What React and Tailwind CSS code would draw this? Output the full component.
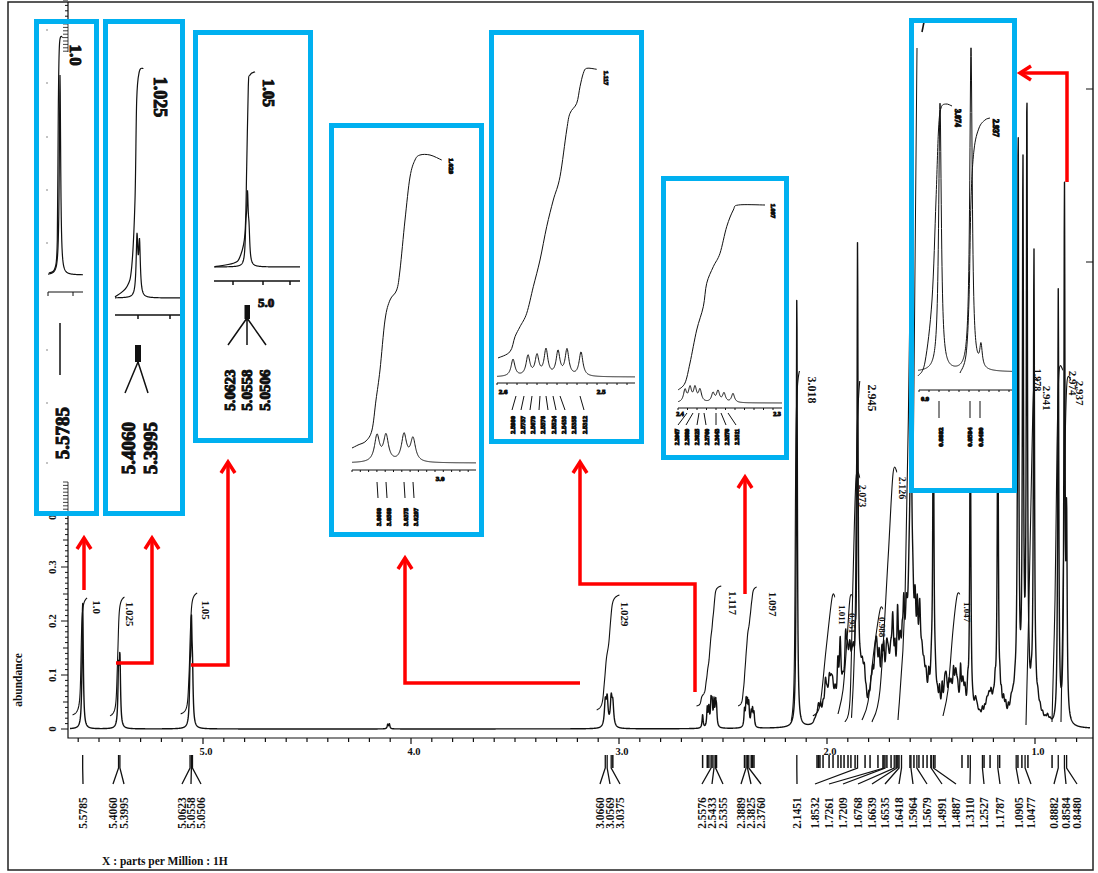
import React from "react";

const SERIF = "'Liberation Serif', 'Times New Roman', serif";
const RED = "#ff0000";
const INK = "#111";

// ppm -> page x, abundance -> page y
const xp = (ppm) => 203 + (5 - ppm) * 208;
const yp = (a) => 729 - a * 540;
const f = (n) => Math.round(n * 100) / 100;

const lor = (x, peaks) => {
  let s = 0;
  for (const [c, h, w] of peaks) {
    const d = (x - c) / w;
    s += h / (1 + d * d);
  }
  return s;
};

function specPath(x0, x1, base, peaks, step = 0.25) {
  const out = [];
  for (let x = x0; x <= x1; x += step) {
    out.push(`${out.length ? "L" : "M"}${f(x)},${f(base - lor(x, peaks))}`);
  }
  return out.join("");
}

function integPath(x0, x1, y0, y1, peaks, shift = -1.5, step = 0.25) {
  const pts = [];
  let acc = 0;
  for (let x = x0; x <= x1; x += step) {
    acc += lor(x, peaks) * step;
    pts.push([x, acc]);
  }
  return pts
    .map(([x, a], i) => `${i ? "L" : "M"}${f(x + shift)},${f(y0 - (a / acc) * (y0 - y1))}`)
    .join("");
}

// catmull-rom through measured points
function smooth(pts) {
  let d = `M${pts[0][0]},${pts[0][1]}`;
  for (let i = 0; i < pts.length - 1; i++) {
    const p0 = pts[i - 1] || pts[i];
    const p1 = pts[i];
    const p2 = pts[i + 1];
    const p3 = pts[i + 2] || p2;
    const c1 = [p1[0] + (p2[0] - p0[0]) / 6, p1[1] + (p2[1] - p0[1]) / 6];
    const c2 = [p2[0] - (p3[0] - p1[0]) / 6, p2[1] - (p3[1] - p1[1]) / 6];
    d += `C${f(c1[0])},${f(c1[1])} ${f(c2[0])},${f(c2[1])} ${f(p2[0])},${f(p2[1])}`;
  }
  return d;
}

// ---------- main spectrum data (ppm, abundance, width ppm) ----------
const PEAKS = [
  [5.5785, 0.235, 0.0035],
  [5.406, 0.1, 0.0035],
  [5.3995, 0.12, 0.0035],
  [5.0623, 0.08, 0.0035],
  [5.0558, 0.17, 0.0035],
  [5.0506, 0.08, 0.0035],
  [4.112, 0.008, 0.003],
  [4.104, 0.009, 0.003],
  [3.066, 0.045, 0.005],
  [3.0569, 0.05, 0.005],
  [3.0375, 0.05, 0.005],
  [3.0297, 0.04, 0.005],
  [2.598, 0.025, 0.003],
  [2.5757, 0.035, 0.003],
  [2.5679, 0.035, 0.003],
  [2.5576, 0.045, 0.003],
  [2.5524, 0.04, 0.003],
  [2.5433, 0.045, 0.003],
  [2.5355, 0.04, 0.003],
  [2.5312, 0.03, 0.003],
  [2.3967, 0.03, 0.003],
  [2.3889, 0.046, 0.003],
  [2.3825, 0.04, 0.003],
  [2.376, 0.04, 0.003],
  [2.3643, 0.025, 0.003],
  [2.3578, 0.03, 0.003],
  [2.3511, 0.025, 0.003],
  [2.1451, 0.8, 0.003],
  [1.8532, 0.78, 0.0028],
  [1.5964, 0.45, 0.003],
  [1.4887, 0.58, 0.003],
  [1.311, 0.58, 0.003],
  [1.1787, 0.6, 0.003],
  [1.081, 1.03, 0.003],
  [1.058, 0.99, 0.003],
  [1.039, 1.1, 0.003],
  [1.005, 0.83, 0.003],
  [0.8882, 0.8, 0.003],
  [0.8584, 0.98, 0.003],
  [0.848, 0.35, 0.003],
  [1.6, 0.09, 0.035],
  [1.93, 0.025, 0.05],
];

const ENV = [
  [2.07, 0], [2.04, 0.03], [1.99, 0.05], [1.94, 0.08], [1.9, 0.06], [1.86, 0.05],
  [1.8, 0.045], [1.76, 0.07], [1.71, 0.09], [1.66, 0.11], [1.62, 0.13], [1.59, 0.14],
  [1.55, 0.11], [1.51, 0.06], [1.47, 0.03], [1.43, 0.045], [1.38, 0.07], [1.34, 0.05],
  [1.29, 0.025], [1.22, 0.025], [1.14, 0.035], [1.0, 0.025], [0.95, 0.015], [0.9, 0],
];
const env = (p) => {
  for (let i = 0; i < ENV.length - 1; i++) {
    const [p0, v0] = ENV[i];
    const [p1, v1] = ENV[i + 1];
    if (p <= p0 && p >= p1) return v0 + ((v1 - v0) * (p0 - p)) / (p0 - p1);
  }
  return 0;
};
let seed = 11;
const rnd = () => (seed = (seed * 16807) % 2147483647) / 2147483647;
for (let p = 2.06; p > 0.92; p -= 0.007 + rnd() * 0.007) {
  const e = env(p) * 1.5;
  if (e > 0.004) PEAKS.push([p, e * (0.3 + 0.7 * rnd()), 0.0035 + rnd() * 0.004]);
}

const toPx = (list) => list.map(([p, a, w]) => [xp(p), a * 540, w * 208]);
const PX = toPx(PEAKS);
const SPECTRUM = specPath(70, 1090, 729, PX);

const INTEGRALS = [
  [5.62, 5.55, 715, 598, "1.0", 97, 607],
  [5.44, 5.37, 716, 597, "1.025", 130, 614],
  [5.1, 5.02, 714, 593, "1.05", 206, 610],
  [3.1, 2.99, 710, 595, "1.029", 625, 614],
  [2.62, 2.5, 706, 586, "1.117", 733, 603],
  [2.42, 2.33, 706, 587, "1.097", 773, 604],
  [2.165, 2.125, 722, 371, "3.018", 812, 390],
  [1.875, 1.835, 722, 381, "2.945", 872, 398],
].map(([hi, lo, y0, y1, label, lx, ly]) => {
  const pk = toPx(PEAKS.filter(([p, , w]) => p <= hi && p >= lo && w < 0.01));
  return { d: integPath(xp(hi), xp(lo), y0, y1, pk), label, lx, ly };
});

const DENSE_INTEGRALS = [
  [[813, 716], [820, 705], [826, 650], [832, 598], [835, 597]],
  [[838, 714], [843, 690], [847, 640], [850, 598], [853, 597]],
  [[845, 722], [850, 700], [853, 580], [856, 479], [860, 478]],
  [[862, 720], [868, 702], [874, 650], [880, 610], [883, 609]],
  [[872, 722], [880, 690], [888, 560], [893, 474], [897, 472]],
  [[898, 720], [905, 600], [910, 300], [913, 20]],
  [[943, 716], [948, 690], [953, 630], [957, 596], [960, 594]],
  [[1026, 725], [1029, 600], [1032, 450], [1034, 383], [1038, 381]],
  [[1052, 722], [1055, 600], [1057, 450], [1059, 372], [1063, 370]],
  [[1061, 722], [1063, 600], [1065, 450], [1067, 382], [1071, 380]],
];
const DENSE_LABELS = [
  ["1.011", 842, 615, 9],
  ["0.951", 852, 623, 9],
  ["2.073", 862, 496, 10],
  ["0.988", 882, 627, 9],
  ["2.126", 902, 488, 10],
  ["1.047", 967, 612, 9],
  ["1.978", 1037, 380, 10],
  ["2.941", 1047, 398, 11],
  ["2.974", 1073, 383, 11],
  ["2.937", 1080, 393, 11],
];

const PPM_LABELS = [
  [5.5785, 83], [5.406, 113], [5.3995, 124],
  [5.0623, 182], [5.0558, 191], [5.0506, 201],
  [3.066, 600], [3.0569, 610], [3.0375, 620],
  [2.5576, 702], [2.5433, 712], [2.5355, 723],
  [2.3889, 741], [2.3825, 751], [2.376, 761],
  [2.1451, 797],
  [1.8532, 815], [1.7261, 829], [1.7209, 843], [1.6768, 858], [1.6639, 872],
  [1.6535, 885], [1.6418, 899], [1.5964, 913], [1.5679, 927], [1.4991, 942],
  [1.4887, 956], [1.311, 970], [1.2527, 984], [1.1787, 1000], [1.0905, 1019],
  [1.0477, 1031], [0.8882, 1054], [0.8584, 1066], [0.848, 1077],
];
const EXTRA_TICKS = [
  3.0297, 2.598, 2.5757, 2.5679, 2.5524, 2.5312, 2.3967, 2.3643, 2.3578, 2.3511,
  2.048, 2.041, 2.034, 2.019, 1.99, 1.971, 1.947, 1.933, 1.918, 1.899, 1.885, 1.865,
  1.817, 1.793, 1.755, 1.731, 1.712, 1.692, 1.668, 1.659, 1.601, 1.582, 1.558, 1.538,
  1.519, 1.5, 1.481, 1.351, 1.322, 1.245, 1.216, 1.17, 1.082, 1.063, 1.034, 0.918,
];

const T = ({ x, y, r = 0, s = 11, anchor = "middle", children }) => (
  <text
    x={x}
    y={y}
    fontSize={s}
    fontWeight="bold"
    fontFamily={SERIF}
    fill={INK}
    textAnchor={anchor}
    dominantBaseline="central"
    transform={r ? `rotate(${r} ${x} ${y})` : undefined}
  >
    {children}
  </text>
);

const Arrow = ({ d, head }) => (
  <g stroke={RED} strokeWidth="3.5" fill="none" strokeLinecap="butt" strokeLinejoin="miter">
    <path d={d} />
    <path d={head} />
  </g>
);

function Inset({ className, vb, children }) {
  return (
    <div className={`absolute border-[5px] border-[#00b0f0] bg-white ${className}`}>
      <svg className="block h-full w-full" viewBox={vb} preserveAspectRatio="none">
        <g stroke={INK} fill="none" strokeWidth="1">
          {children}
        </g>
      </svg>
    </div>
  );
}

const Ticks = ({ x0, x1, y, step, len = 2 }) => {
  const out = [];
  for (let x = x0; x <= x1; x += step) out.push(`M${f(x)},${y}L${f(x)},${y + len}`);
  return <path d={`M${x0},${y}L${x1},${y}` + out.join("")} />;
};

function MainChart() {
  const yTicks = [];
  for (let i = 0; i <= 135; i++) {
    const y = yp(i / 100);
    const len = i % 10 === 0 ? 7 : i % 5 === 0 ? 5 : 3;
    yTicks.push(`M${68 - len},${f(y)}L68,${f(y)}`);
  }
  const xTicks = [];
  for (let p = 56; p >= 7; p--) {
    const x = xp(p / 10);
    if (x > 70 && x < 1092) xTicks.push(`M${f(x)},738L${f(x)},${p % 10 === 0 ? 744 : 742}`);
  }

  return (
    <svg className="block" width="1098" height="873" viewBox="0 0 1098 873">
      <rect x="8" y="2" width="1085" height="868" fill="none" stroke="#222" strokeWidth="1.5" />

      {/* axes */}
      <g stroke={INK} strokeWidth="1.2" fill="none">
        <path d="M68,2L68,738L1093,738" />
        <path d={yTicks.join("")} strokeWidth="1" />
        <path d={xTicks.join("")} />
        <path d="M1086,89L1093,89M1086,262L1093,262" />
      </g>
      {["0", "0.1", "0.2", "0.3", "0.4"].map((t, i) => (
        <T key={t} x={52} y={yp(i / 10)} r={-90} s={11}>
          {t}
        </T>
      ))}
      {[5, 4, 3, 2, 1].map((v) => (
        <T key={v} x={xp(v) + 3} y={751} s={10.5}>
          {v}.0
        </T>
      ))}
      <T x={18} y={680} r={-90} s={11.5}>
        abundance
      </T>
      <T x={102} y={861} s={11.5} anchor="start">
        X : parts per Million : 1H
      </T>

      {/* spectrum */}
      <path d={SPECTRUM} stroke={INK} strokeWidth="1.4" fill="none" strokeLinejoin="round" />

      {/* integrals */}
      <g stroke={INK} strokeWidth="1.1" fill="none">
        {INTEGRALS.map((g) => (
          <path key={g.label} d={g.d} />
        ))}
        {DENSE_INTEGRALS.map((pts, i) => (
          <path key={i} d={smooth(pts)} />
        ))}
      </g>
      {INTEGRALS.map((g) => (
        <T key={g.label} x={g.lx} y={g.ly} r={90} s={g.label.startsWith("3") || g.label.startsWith("2") ? 12 : 11}>
          {g.label}
        </T>
      ))}
      {DENSE_LABELS.map(([t, x, y, s]) => (
        <T key={t} x={x} y={y} r={90} s={s}>
          {t}
        </T>
      ))}

      {/* peak picking */}
      <g stroke={INK} strokeWidth="1.5" fill="none">
        {EXTRA_TICKS.map((p) => (
          <path key={p} d={`M${f(xp(p))},755L${f(xp(p))},768`} />
        ))}
        {PPM_LABELS.map(([p, lx]) => (
          <path key={p} d={`M${f(xp(p))},755L${f(xp(p))},768L${lx},784`} strokeWidth="1.3" />
        ))}
      </g>
      {PPM_LABELS.map(([p, lx]) => (
        <T key={p} x={lx} y={813} r={-90} s={11.5}>
          {p.toFixed(4)}
        </T>
      ))}

      {/* red pointers */}
      <Arrow d="M84,590L84,539" head="M77,549L84,538L91,549" />
      <Arrow d="M116,663L152,663L152,539" head="M145,549L152,538L159,549" />
      <Arrow d="M191,665L228,665L228,463" head="M221,473L228,462L235,473" />
      <Arrow d="M580,683L405,683L405,559" head="M398,569L405,558L412,569" />
      <Arrow d="M695,692L695,584L580,584L580,463" head="M573,473L580,462L587,473" />
      <Arrow d="M745,594L745,478" head="M738,488L745,477L752,488" />
      <Arrow d="M1067,182L1067,73L1021,73" head="M1031,66L1020,73L1031,80" />
    </svg>
  );
}

export default function App() {
  const axisTop = [];
  for (let y = 24; y <= 52; y += 3.4) axisTop.push(`M63,${f(y)}L68,${f(y)}`);
  for (let y = 482; y <= 511; y += 3.4) axisTop.push(`M63,${f(y)}L68,${f(y)}`);

  return (
    <div className="relative h-[873px] w-[1098px] overflow-hidden bg-white">
      <MainChart />

      {/* 5.5785 */}
      <Inset className="left-[34px] top-[19px] h-[497px] w-[65px]" vb="39 24 55 487">
        <path d={"M68,24L68,52M68,482L68,511" + axisTop.join("")} strokeWidth="0.8" />
        <path d="M47,29v2M47,82v2M47,136v2M47,189v2M47,242v2M47,349v2M47,402v2M47,462v2" stroke="#888" />
        <path d={specPath(48, 83, 275, [[60, 200, 0.8]])} strokeWidth="1.2" />
        <path d={smooth([[49, 273], [55, 268], [57.3, 240], [58.3, 110], [59.5, 44], [62.7, 37]])} strokeWidth="1.2" />
        <Ticks x0={48} x1={83} y={292} step={25} len={4} />
        <path d="M60,323L60,375" strokeWidth="1.5" />
        <T x={75} y={55} r={90} s={17}>
          1.0
        </T>
        <T x={62} y={433} r={-90} s={19}>
          5.5785
        </T>
      </Inset>

      {/* 5.4060 / 5.3995 */}
      <Inset className="left-[103px] top-[19px] h-[497px] w-[82px]" vb="108 24 72 487">
        <path d={specPath(115, 183, 298, [[137, 58, 1], [139.5, 52, 1]])} strokeWidth="1.2" />
        <path d={smooth([[115, 297], [126.7, 287], [131.7, 267], [135, 200], [136.7, 100], [139.3, 71.7], [143.3, 68.3]])} strokeWidth="1.2" />
        <path d="M115,315L183,315M138,315L138,319M170,315L170,319" strokeWidth="1.5" />
        <rect x="135" y="345" width="6" height="17" fill={INK} stroke="none" />
        <path d="M138,362L125,393M138,362L148,393" strokeWidth="1.5" />
        <T x={160} y={97} r={90} s={18}>
          1.025
        </T>
        <T x={128} y={448} r={-90} s={19}>
          5.4060
        </T>
        <T x={150} y={448} r={-90} s={19}>
          5.3995
        </T>
      </Inset>

      {/* 5.06 triplet */}
      <Inset className="left-[193px] top-[30px] h-[413px] w-[120px]" vb="198 35 110 403">
        <path d={specPath(214, 300, 267, [[246, 30, 0.9], [247.5, 62, 0.9], [249, 26, 0.9]])} strokeWidth="1.2" />
        <path d={smooth([[215, 266.7], [233.3, 263.3], [240, 256.7], [245, 233.3], [246.7, 166.7], [248.3, 86.7], [250, 75], [255, 71.7]])} strokeWidth="1.2" />
        <path d="M214,281L300,281M233,281L233,285M263,281L263,285M290,281L290,285" strokeWidth="1.5" />
        <T x={266} y={302} s={13}>
          5.0
        </T>
        <rect x="244.5" y="305" width="5.5" height="14" fill={INK} stroke="none" />
        <path d="M247,318L228,345M247,318L247,345M247,318L266,345" strokeWidth="1.5" />
        <T x={268} y={93} r={90} s={16}>
          1.05
        </T>
        {[["5.0623", 230], ["5.0558", 247], ["5.0506", 265]].map(([t, x]) => (
          <T key={t} x={x} y={390} r={-90} s={15}>
            {t}
          </T>
        ))}
      </Inset>

      {/* 3.05 */}
      <Inset className="left-[329px] top-[123px] h-[414px] w-[155px]" vb="334 128 145 404">
        <path d={specPath(352, 476, 463, [[377, 26, 3], [386, 26, 3], [404, 27, 3], [413, 23, 3]])} />
        <path d={smooth([[352, 448], [358, 445], [366, 441], [372, 430], [376, 400], [380, 370], [385, 320], [390, 300], [396.7, 290], [400, 270], [405, 220], [410, 177], [415, 160], [420, 155], [430, 155], [441.7, 160]])} />
        <Ticks x0={352} x1={476} y={470} step={8.3} len={2} />
        <T x={440} y={479} s={7}>
          3.0
        </T>
        <path d="M377,482L378,498M386,482L387,498M404,482L405,498M413,482L414,498" />
        <T x={451} y={166} r={90} s={7}>
          1.029
        </T>
        {[["3.0660", 378], ["3.0569", 388], ["3.0375", 405], ["3.0297", 415]].map(([t, x]) => (
          <T key={t} x={x} y={517} r={-90} s={6.5}>
            {t}
          </T>
        ))}
      </Inset>

      {/* 2.55 */}
      <Inset className="left-[489px] top-[30px] h-[414px] w-[155px]" vb="494 35 145 404">
        <path d={specPath(497, 635, 377, [[513, 17, 2.3], [528, 20, 2.3], [537, 20, 2.3], [546, 26, 2.3], [558, 24, 2.3], [567, 26, 2.3], [581, 24, 2.3]])} />
        <path d={smooth([[498, 358], [510, 351.7], [515, 336.7], [520, 326.7], [526.7, 313.3], [533.3, 286.7], [540, 260], [546.7, 226.7], [553.3, 200], [560, 176.7], [566.7, 130], [570, 113.3], [576.7, 103.3], [580, 86.7], [583.3, 73.3], [586.7, 68.3], [596.7, 69.3]])} />
        <Ticks x0={497} x1={635} y={383} step={10} len={2} />
        <T x={503} y={392} s={7}>
          2.6
        </T>
        <T x={601} y={392} s={7}>
          2.5
        </T>
        <path d="M516,396L512,410M524,396L521,410M532,396L530,410M540,396L539,410M546,396L548,410M553,396L556,410M560,396L565,410M580,396L584,410" />
        <T x={606} y={78} r={90} s={6.5}>
          1.117
        </T>
        {["2.5980", "2.5757", "2.5679", "2.5576", "2.5524", "2.5433", "2.5355", "2.5312"].map((t, i) => (
          <T key={t} x={512 + i * 10.3} y={425} r={-90} s={6.5}>
            {t}
          </T>
        ))}
      </Inset>

      {/* 2.38 */}
      <Inset className="left-[661px] top-[176px] h-[284px] w-[128px]" vb="666 181 118 274">
        <path d={specPath(678, 782, 403, [[685, 12, 1.8], [690, 14, 1.8], [695, 14, 1.8], [700, 12, 1.8], [713, 9, 1.8], [718, 11, 1.8], [724, 9, 1.8], [733, 9, 1.8]])} />
        <path d={smooth([[678, 390], [685, 383], [690, 363], [696.7, 330], [703.3, 306.7], [706.7, 283.3], [713.3, 266.7], [720, 253.3], [726.7, 226.7], [733.3, 210], [738.3, 205], [765, 205]])} />
        <Ticks x0={678} x1={782} y={408} step={9.5} len={2} />
        <T x={680} y={414} s={6}>
          2.4
        </T>
        <T x={777} y={414} s={6}>
          2.3
        </T>
        <path d="M687,413L678,425M693,413L686,425M699,413L697,425M704,413L706,425M716,413L716,425M721,413L726,425M728,413L736,425" />
        <T x={773} y={211} r={90} s={6.5}>
          1.097
        </T>
        {["2.3967", "2.3889", "2.3825", "2.3760", "2.3643", "2.3578", "2.3511"].map((t, i) => (
          <T key={t} x={677 + i * 10} y={437} r={-90} s={6}>
            {t}
          </T>
        ))}
      </Inset>

      {/* 0.88 / 0.85 */}
      <Inset className="left-[909px] top-[18px] h-[475px] w-[108px]" vb="914 23 98 465">
        <path d="M913,490L917,48" />
        <path d="M922,32L925,17" strokeWidth="1.6" />
        <path d={specPath(918, 1012, 372, [[940, 268, 1.6], [971, 323, 1.5], [981, 22, 1.5]])} />
        <path d={smooth([[918, 376], [925, 362], [932, 300], [936, 200], [938.5, 130], [941, 108], [946, 104], [952, 106]])} />
        <path d={smooth([[960, 373], [966, 355], [969, 300], [971, 200], [974, 150], [979, 128], [985, 120], [990, 118]])} />
        <Ticks x0={919} x1={1012} y={390} step={10} len={2} />
        <T x={925} y={398} s={6.5}>
          0.9
        </T>
        <path d="M939,401L939,418M970,401L970,418M980,401L980,418" />
        <T x={957} y={118} r={90} s={8}>
          3.074
        </T>
        <T x={995} y={128} r={90} s={8}>
          2.937
        </T>
        {[["0.8882", 941], ["0.8584", 970], ["0.8480", 981]].map(([t, x]) => (
          <T key={t} x={x} y={437} r={-90} s={7}>
            {t}
          </T>
        ))}
      </Inset>
    </div>
  );
}
